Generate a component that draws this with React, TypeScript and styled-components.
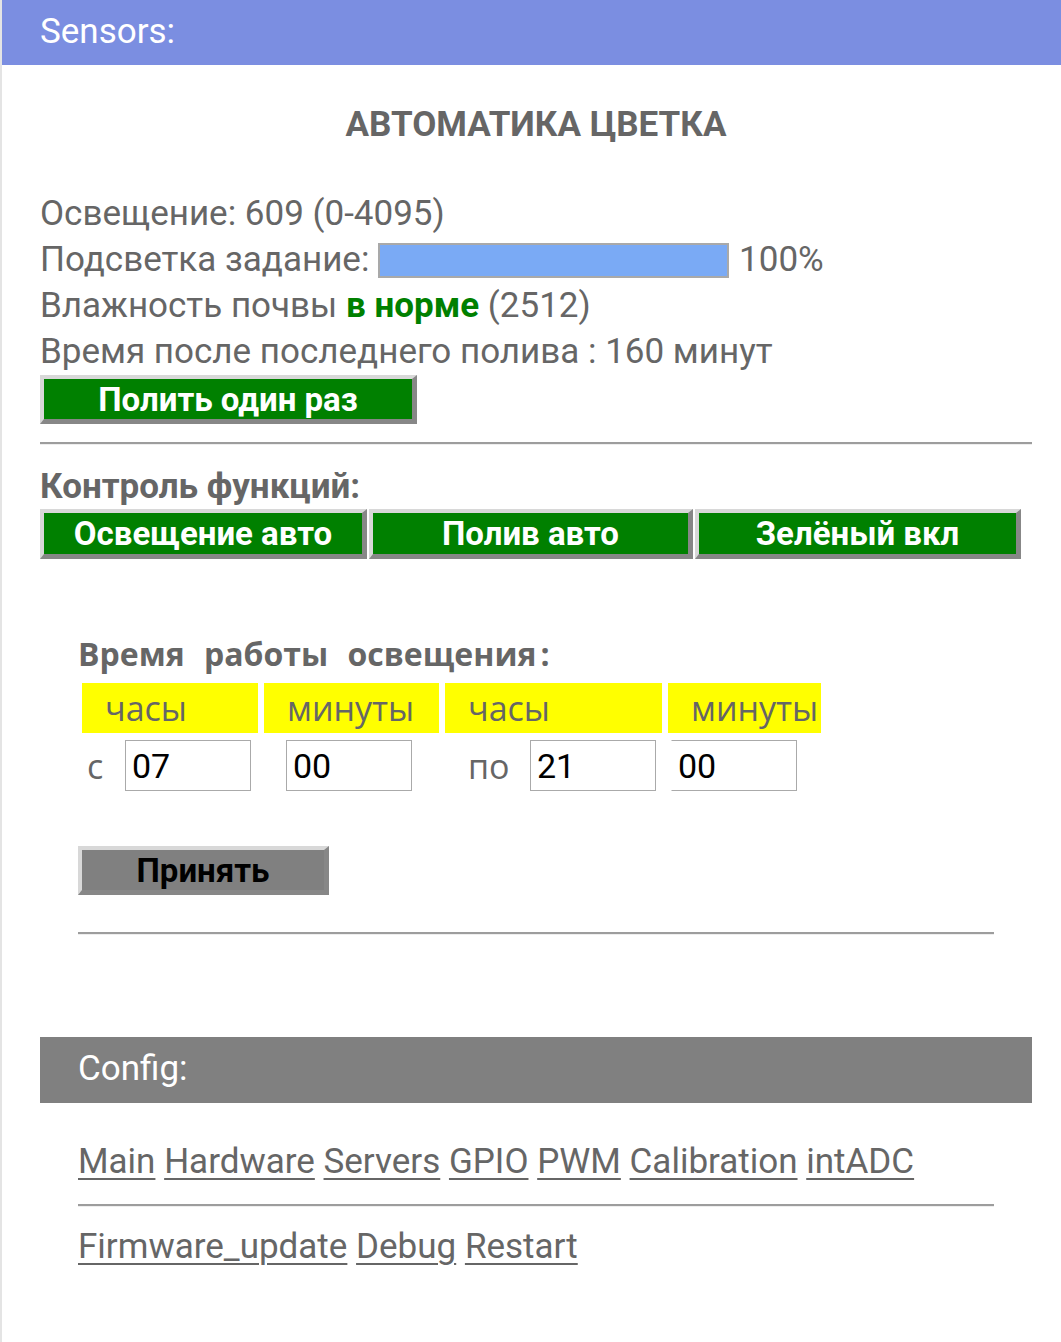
import styled, { createGlobalStyle } from 'styled-components';

const GlobalStyle = createGlobalStyle`
  html, body {
    margin: 0;
    padding: 0;
    background: #fff;
  }
  body {
    font-family: Roboto, "Liberation Sans", sans-serif;
    color: #666;
  }
`;

const Page = styled.div`
  min-height: 1342px;
  border-left: 2px solid #e4e4e4;
  box-sizing: border-box;
`;

const Bar = styled.div<{ $bg: string; $h: number }>`
  height: ${(p) => p.$h}px;
  box-sizing: border-box;
  display: flex;
  align-items: center;
  padding: 0 0 3px 38px;
  background: ${(p) => p.$bg};
  color: #fff;
  font-size: 35px;
`;

const Content = styled.div`
  padding: 0 29px 0 38px;
`;

const Title = styled.h1`
  margin: 0;
  padding: 38px 0 44px;
  text-align: center;
  font-size: 35px;
  font-weight: 700;
  line-height: 44px;
  color: #666;
`;

const Line = styled.div`
  font-size: 35px;
  line-height: 46px;
  display: flex;
  align-items: center;
  white-space: pre;
`;

const Ok = styled.b`
  color: #008000;
`;

const Progress = styled.div`
  width: 347px;
  height: 31px;
  border: 2px solid #a9a9a9;
  background: #7aaaf5;
  margin: 0 10px 0 0;
`;

const Btn = styled.button<{ $w: number; $h?: number; $bg?: string; $fg?: string }>`
  width: ${(p) => p.$w}px;
  height: ${(p) => p.$h ?? 49}px;
  box-sizing: border-box;
  border-style: solid;
  border-width: 4px 5px 5px 4px;
  border-color: #d8d8d8 #878787 #878787 #d8d8d8;
  background: ${(p) => p.$bg ?? '#008000'};
  color: ${(p) => p.$fg ?? '#fff'};
  font-family: Roboto, "Liberation Sans", sans-serif;
  font-size: 33px;
  font-weight: 700;
  padding: 0;
  line-height: 1;
  display: flex;
  align-items: center;
  justify-content: center;
`;

const Rule = styled.hr<{ $mt: number; $mb: number }>`
  border: none;
  height: 0;
  border-top: 2px solid #9d9d9d;
  border-bottom: 1px solid #eee;
  margin: ${(p) => p.$mt}px 0 ${(p) => p.$mb}px;
`;

const Heading = styled.div`
  font-size: 35px;
  font-weight: 700;
  line-height: 40px;
  margin-bottom: 2px;
`;

const BtnRow = styled.div`
  display: flex;
  gap: 2px;
`;

const Schedule = styled.div`
  padding: 73px 38px 0;
`;

const SchedTitle = styled.div`
  font-family: "Open Sans", "Noto Sans", sans-serif;
  font-size: 32px;
  font-weight: 700;
  line-height: 44px;
  word-spacing: 11px;
  white-space: pre;
  margin-bottom: 7px;
`;

const Colon = styled.span`
  margin-left: 4px;
`;

const Grid = styled.div`
  display: grid;
  grid-template-columns: 176px 175px 217px 153px;
  column-gap: 6px;
  row-gap: 7px;
  margin-left: 4px;
`;

const HeadCell = styled.div`
  background: #ffff00;
  height: 50px;
  display: flex;
  align-items: center;
  padding-left: 23px;
  font-family: "Open Sans", "Noto Sans", sans-serif;
  font-size: 34px;
  color: #666;
`;

const Cell = styled.div<{ $pad: number }>`
  display: flex;
  align-items: center;
  padding-left: ${(p) => p.$pad}px;
  font-family: "Open Sans", "Noto Sans", sans-serif;
  font-size: 34px;
  color: #666;
`;

const Label = styled.span<{ $w: number }>`
  width: ${(p) => p.$w}px;
`;

const TimeInput = styled.input<{ $noLeft?: boolean }>`
  width: 126px;
  height: 51px;
  box-sizing: border-box;
  border: 1px solid #aaa;
  ${(p) => (p.$noLeft ? 'border-left-color: transparent;' : '')}
  padding: 0 0 0 6px;
  font-family: Roboto, "Liberation Sans", sans-serif;
  font-size: 34px;
  color: #000;
  background: #fff;
  outline: none;
`;

const Spacer = styled.div<{ $h: number }>`
  height: ${(p) => p.$h}px;
`;

const Links = styled.div`
  font-size: 35px;
  font-stretch: 90%;
  line-height: 44px;
  white-space: pre;
`;

const Link = styled.a`
  color: #666;
  text-decoration: underline;
  text-underline-offset: 5px;
  text-decoration-thickness: 2px;
`;

const ConfigBody = styled.div`
  padding: 37px 38px 0;
`;

function LinkRow({ items }: { items: string[] }) {
  return (
    <Links>
      {items.map((name, i) => (
        <span key={name}>
          {i > 0 && ' '}
          <Link href="#">{name}</Link>
        </span>
      ))}
    </Links>
  );
}

export default function App() {
  return (
    <>
      <GlobalStyle />
      <Page>
        <Bar $bg="#7b8ee1" $h={65}>
          Sensors:
        </Bar>
        <Content>
          <Title>АВТОМАТИКА ЦВЕТКА</Title>
          <Line>Освещение: 609 (0-4095)</Line>
          <Line>
            {'Подсветка задание: '}
            <Progress />
            100%
          </Line>
          <Line>
            {'Влажность почвы '}
            <Ok>в норме</Ok>
            {' (2512)'}
          </Line>
          <Line>Время после последнего полива : 160 минут</Line>
          <Btn $w={377}>Полить один раз</Btn>
          <Rule $mt={18} $mb={22} />
          <Heading>Контроль функций:</Heading>
          <BtnRow>
            <Btn $w={327} $h={50}>Освещение авто</Btn>
            <Btn $w={324} $h={50}>Полив авто</Btn>
            <Btn $w={326} $h={50}>Зелёный вкл</Btn>
          </BtnRow>

          <Schedule>
            <SchedTitle>
              Время работы освещения<Colon>:</Colon>
            </SchedTitle>
            <Grid>
              <HeadCell>часы</HeadCell>
              <HeadCell>минуты</HeadCell>
              <HeadCell>часы</HeadCell>
              <HeadCell>минуты</HeadCell>
              <Cell $pad={5}>
                <Label $w={38}>с</Label>
                <TimeInput defaultValue="07" />
              </Cell>
              <Cell $pad={22}>
                <TimeInput defaultValue="00" />
              </Cell>
              <Cell $pad={23}>
                <Label $w={62}>по</Label>
                <TimeInput defaultValue="21" />
              </Cell>
              <Cell $pad={3}>
                <TimeInput $noLeft defaultValue="00" />
              </Cell>
            </Grid>
            <Spacer $h={55} />
            <Btn $w={251} $bg="#808080" $fg="#000">
              Принять
            </Btn>
            <Rule $mt={37} $mb={0} />
          </Schedule>
        </Content>

        <Spacer $h={102} />
        <Content>
          <Bar $bg="#808080" $h={66}>
            Config:
          </Bar>
          <ConfigBody>
            <LinkRow items={['Main', 'Hardware', 'Servers', 'GPIO', 'PWM', 'Calibration', 'intADC']} />
            <Rule $mt={20} $mb={18} />
            <LinkRow items={['Firmware_update', 'Debug', 'Restart']} />
          </ConfigBody>
        </Content>
      </Page>
    </>
  );
}
